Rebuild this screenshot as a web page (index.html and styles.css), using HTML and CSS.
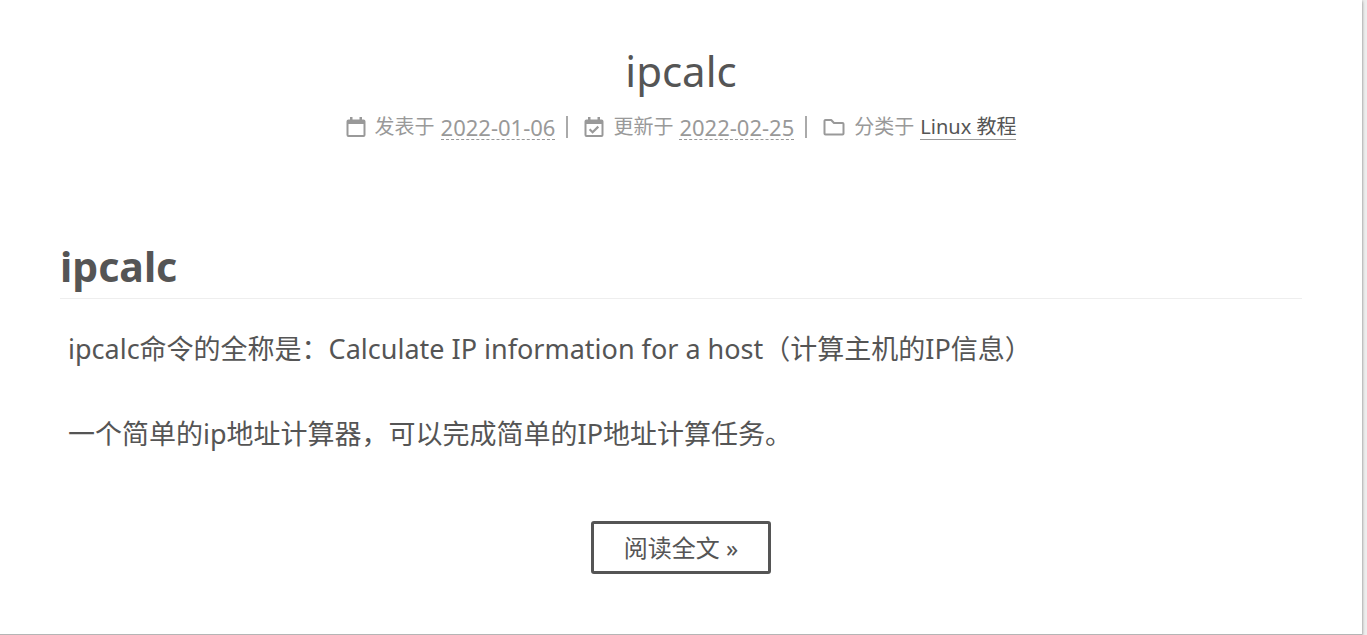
FILE: index.html
```
<!DOCTYPE html>
<html lang="zh-CN">
<head>
<meta charset="utf-8">
<meta name="viewport" content="width=device-width, initial-scale=1">
<title>ipcalc</title>
<link rel="stylesheet" href="styles.css">
</head>
<body>
<article class="post">
  <header class="post-header">
    <h1 class="post-title">ipcalc</h1>
    <div class="post-meta">
      <span class="meta-item">
        <svg class="icon" viewBox="0 0 20 22" aria-hidden="true"><path fill-rule="evenodd" d="M4 1h2.500v2.500h7V1H16v2.500h1.500a2 2 0 0 1 2 2V19a2 2 0 0 1-2 2h-15a2 2 0 0 1-2-2V5.500a2 2 0 0 1 2-2H4zM2.500 8v11h15V8z"/></svg>
        <span>发表于</span>
        <time class="date" datetime="2022-01-06">2022-01-06</time>
      </span>
      <span class="meta-item">
        <svg class="icon" viewBox="0 0 20 22" aria-hidden="true"><path fill-rule="evenodd" d="M4 1h2.500v2.500h7V1H16v2.500h1.500a2 2 0 0 1 2 2V19a2 2 0 0 1-2 2h-15a2 2 0 0 1-2-2V5.500a2 2 0 0 1 2-2H4zM2.500 8v11h15V8z"/><path d="M5.600 13.300l3 3 5.700-5.700" fill="none" stroke="currentColor" stroke-width="2.200"/></svg>
        <span>更新于</span>
        <time class="date" datetime="2022-02-25">2022-02-25</time>
      </span>
      <span class="meta-item">
        <svg class="icon icon-folder" viewBox="0 0 22 22" aria-hidden="true"><path fill="none" stroke="currentColor" stroke-width="2" stroke-linejoin="round" d="M2.500 4h5.700l2.800 3h8.500a1 1 0 0 1 1 1v9.500a1 1 0 0 1-1 1h-17a1 1 0 0 1-1-1V5a1 1 0 0 1 1-1z"/></svg>
        <span>分类于</span>
        <a class="category" href="#">Linux 教程</a>
      </span>
    </div>
  </header>
  <div class="post-body">
    <h2 class="section-title">ipcalc</h2>
    <p class="text">ipcalc命令的全称是：Calculate IP information for a host（计算主机的IP信息）</p>
    <p class="text">一个简单的ip地址计算器，可以完成简单的IP地址计算任务。</p>
  </div>
  <footer class="post-footer">
    <a class="read-more" href="#">阅读全文 »</a>
  </footer>
</article>
</body>
</html>
```
FILE: styles.css
```
* {
  box-sizing: border-box;
}

body {
  margin: 0;
  background: #eee;
  color: #555;
  font-family: "Noto Sans", "Noto Sans CJK SC", sans-serif;
}

.post {
  margin-right: 5px;
  padding: 40px 60px 60px;
  border-bottom: 1px solid #b5b5b5;
  background: #fff;
  box-shadow: 0 1px 3px rgba(0, 0, 0, 0.5);
}

.post-header {
  margin-bottom: 94px;
  text-align: center;
}

.post-title {
  margin: 0;
  font-size: 42px;
  font-weight: 400;
  line-height: 62px;
}

.post-meta {
  display: flex;
  flex-wrap: wrap;
  justify-content: center;
  margin-top: 11px;
  color: #999;
  font-size: 20px;
  line-height: 28px;
}

.meta-item {
  display: flex;
  align-items: center;
  gap: 6px;
}

.meta-item + .meta-item::before {
  content: "";
  width: 2px;
  height: 22px;
  margin: 0 10px 0 11px;
  background: #aaa;
}

.icon {
  width: 20px;
  height: 22px;
  margin-right: 3px;
  fill: currentColor;
}

.icon-folder {
  width: 22px;
}

.date,
.category {
  border-bottom: 1px dashed #999;
  font-size: 22px;
  line-height: 24px;
}

.category {
  border-bottom-style: solid;
  color: #555;
  font-size: 20px;
  text-decoration: none;
}

.section-title {
  margin: 0 0 29px;
  padding-bottom: 1px;
  border-bottom: 1px solid #eee;
  font-size: 41px;
  font-weight: 700;
  line-height: 62px;
}

.text {
  margin: 0 8px 44px;
  font-size: 27px;
  line-height: 41px;
}

.post-footer {
  display: flex;
  justify-content: center;
  margin-top: 67px;
}

.read-more {
  padding: 0 30px;
  border: 3px solid #555;
  border-radius: 3px;
  color: #555;
  font-size: 24px;
  line-height: 47px;
  text-decoration: none;
}
```
